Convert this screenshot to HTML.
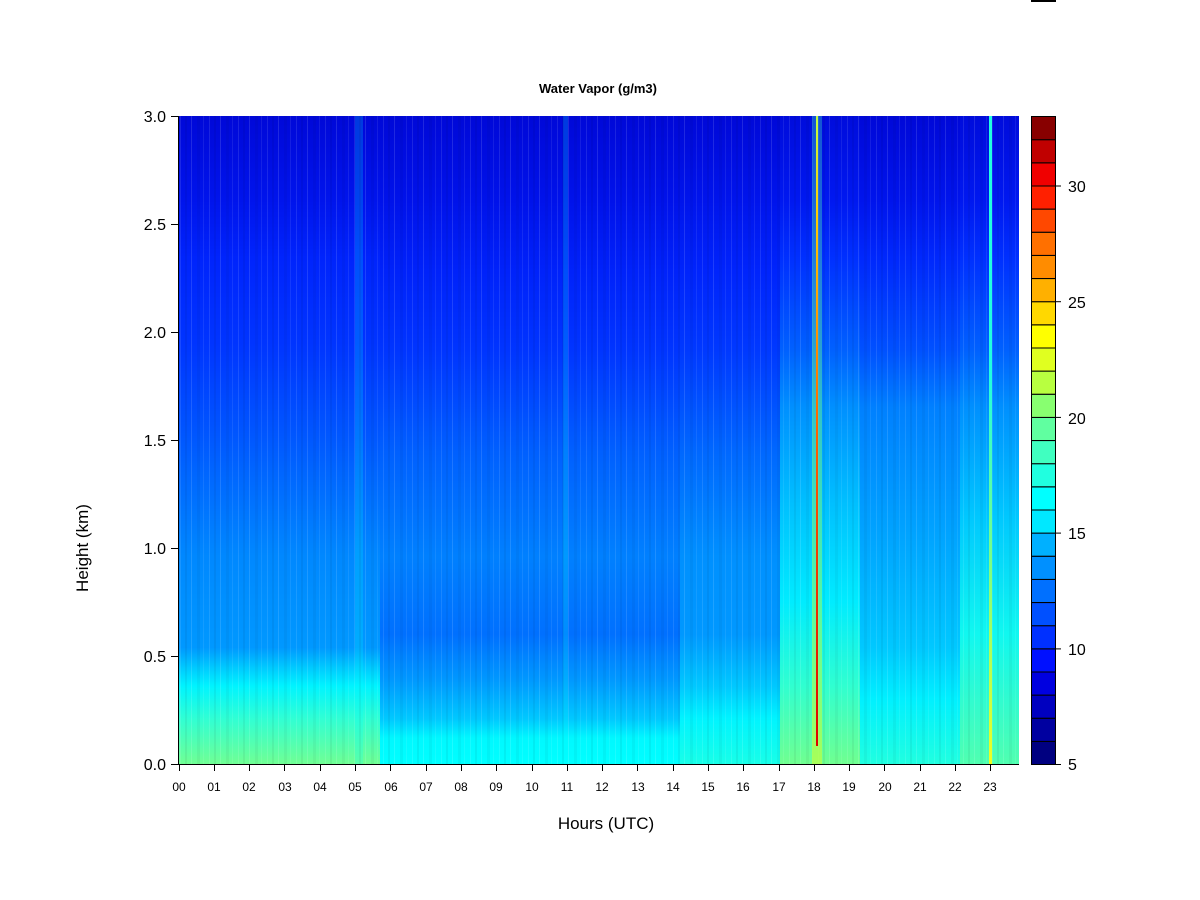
<!DOCTYPE html>
<html><head><meta charset="utf-8"><style>
html,body{margin:0;padding:0;background:#fff;width:1200px;height:900px;overflow:hidden}
svg text{font-family:"Liberation Sans",Arial,sans-serif;fill:#000}
</style></head><body>
<svg width="1200" height="900" viewBox="0 0 1200 900" xmlns="http://www.w3.org/2000/svg">
<defs>
<linearGradient id="gA" gradientUnits="userSpaceOnUse" x1="0" y1="116" x2="0" y2="764">
<stop offset="0" stop-color="#0008d8"/><stop offset="0.13" stop-color="#0014ec"/><stop offset="0.22" stop-color="#0024fc"/>
<stop offset="0.35" stop-color="#0034ff"/><stop offset="0.5" stop-color="#0058ff"/><stop offset="0.68" stop-color="#0088ff"/>
<stop offset="0.82" stop-color="#0098ff"/><stop offset="0.85" stop-color="#00c8ff"/><stop offset="0.88" stop-color="#00f4ff"/>
<stop offset="0.93" stop-color="#30ffd4"/><stop offset="1" stop-color="#70ff94"/>
</linearGradient>
<linearGradient id="gB" gradientUnits="userSpaceOnUse" x1="0" y1="116" x2="0" y2="764">
<stop offset="0" stop-color="#0008d8"/><stop offset="0.13" stop-color="#0012ea"/><stop offset="0.24" stop-color="#0022fa"/>
<stop offset="0.36" stop-color="#0034ff"/><stop offset="0.52" stop-color="#0060ff"/><stop offset="0.68" stop-color="#0080ff"/>
<stop offset="0.8" stop-color="#0070ff"/><stop offset="0.87" stop-color="#0098ff"/><stop offset="0.93" stop-color="#00c8ff"/>
<stop offset="0.96" stop-color="#00f8ff"/><stop offset="1" stop-color="#00ffff"/>
</linearGradient>
<linearGradient id="gC" gradientUnits="userSpaceOnUse" x1="0" y1="116" x2="0" y2="764">
<stop offset="0" stop-color="#0008d8"/><stop offset="0.13" stop-color="#0014ec"/><stop offset="0.24" stop-color="#0024fc"/>
<stop offset="0.36" stop-color="#0038ff"/><stop offset="0.52" stop-color="#0068ff"/><stop offset="0.68" stop-color="#0090ff"/>
<stop offset="0.8" stop-color="#0098ff"/><stop offset="0.88" stop-color="#00c8ff"/><stop offset="0.93" stop-color="#00f4ff"/>
<stop offset="1" stop-color="#18ffe8"/>
</linearGradient>
<linearGradient id="gD" gradientUnits="userSpaceOnUse" x1="0" y1="116" x2="0" y2="764">
<stop offset="0" stop-color="#000cdc"/><stop offset="0.13" stop-color="#0018f0"/><stop offset="0.22" stop-color="#0030ff"/>
<stop offset="0.36" stop-color="#0060ff"/><stop offset="0.45" stop-color="#0090ff"/><stop offset="0.6" stop-color="#00c0ff"/>
<stop offset="0.75" stop-color="#00ecff"/><stop offset="0.88" stop-color="#30ffd0"/><stop offset="1" stop-color="#70ff90"/>
</linearGradient>
<linearGradient id="gE" gradientUnits="userSpaceOnUse" x1="0" y1="116" x2="0" y2="764">
<stop offset="0" stop-color="#0008d8"/><stop offset="0.13" stop-color="#0014ec"/><stop offset="0.22" stop-color="#0028fc"/>
<stop offset="0.36" stop-color="#0050ff"/><stop offset="0.45" stop-color="#0080ff"/><stop offset="0.65" stop-color="#00a4ff"/>
<stop offset="0.82" stop-color="#00c8ff"/><stop offset="0.9" stop-color="#00f0ff"/><stop offset="1" stop-color="#20ffe0"/>
</linearGradient>
<linearGradient id="gF" gradientUnits="userSpaceOnUse" x1="0" y1="116" x2="0" y2="764">
<stop offset="0" stop-color="#000cdc"/><stop offset="0.13" stop-color="#0018f0"/><stop offset="0.22" stop-color="#0030ff"/>
<stop offset="0.36" stop-color="#0060ff"/><stop offset="0.45" stop-color="#0090ff"/><stop offset="0.62" stop-color="#00c8ff"/>
<stop offset="0.8" stop-color="#10f8f0"/><stop offset="1" stop-color="#50ffb0"/>
</linearGradient>
<linearGradient id="red" x1="0" y1="0" x2="0" y2="1">
<stop offset="0" stop-color="#c0ff40"/><stop offset="0.15" stop-color="#ffd000"/>
<stop offset="0.5" stop-color="#ff6000"/><stop offset="1" stop-color="#e00000"/>
</linearGradient>
<linearGradient id="glow" x1="0" y1="0" x2="0" y2="1">
<stop offset="0" stop-color="#40ffc0" stop-opacity="0.3"/><stop offset="0.6" stop-color="#80ff70" stop-opacity="0.5"/>
<stop offset="1" stop-color="#c0ff40" stop-opacity="0.7"/>
</linearGradient>
<linearGradient id="l23" x1="0" y1="0" x2="0" y2="1">
<stop offset="0" stop-color="#20ffe0"/><stop offset="0.4" stop-color="#20ffe0"/><stop offset="0.7" stop-color="#80ff80"/>
<stop offset="1" stop-color="#f0ff20"/>
</linearGradient>
<pattern id="str" width="29" height="648" patternUnits="userSpaceOnUse" x="178" y="116">
<rect x="2" width="1" height="648" fill="#fff" opacity="0.1"/>
<rect x="7" width="2" height="648" fill="#000" opacity="0.05"/>
<rect x="13" width="1" height="648" fill="#fff" opacity="0.12"/>
<rect x="19" width="3" height="648" fill="#000" opacity="0.04"/>
<rect x="25" width="1" height="648" fill="#fff" opacity="0.08"/>
</pattern>
</defs>
<!-- plot -->
<rect x="178" y="116" width="203" height="648" fill="url(#gA)"/>
<rect x="380" y="116" width="301" height="648" fill="url(#gB)"/>
<rect x="680" y="116" width="101" height="648" fill="url(#gC)"/>
<rect x="780" y="116" width="81" height="648" fill="url(#gD)"/>
<rect x="860" y="116" width="101" height="648" fill="url(#gE)"/>
<rect x="960" y="116" width="59" height="648" fill="url(#gF)"/>
<rect x="355" y="116" width="8" height="648" fill="#00ffff" opacity="0.2"/>
<rect x="563" y="116" width="5" height="648" fill="#00ffff" opacity="0.2"/>
<rect x="178" y="116" width="841" height="648" fill="url(#str)"/>
<rect x="812" y="116" width="10" height="648" fill="url(#glow)"/>
<rect x="816" y="116" width="2" height="630" fill="url(#red)"/>
<rect x="989" y="116" width="3" height="648" fill="url(#l23)"/>
<!-- axes -->
<g stroke="#000" stroke-width="1" fill="none">
<line x1="178.5" y1="116" x2="178.5" y2="764"/>
<line x1="178" y1="764.5" x2="1019" y2="764.5"/>
<line x1="171" y1="116.5" x2="178" y2="116.5"/>
<line x1="171" y1="224.5" x2="178" y2="224.5"/>
<line x1="171" y1="332.5" x2="178" y2="332.5"/>
<line x1="171" y1="440.5" x2="178" y2="440.5"/>
<line x1="171" y1="548.5" x2="178" y2="548.5"/>
<line x1="171" y1="656.5" x2="178" y2="656.5"/>
<line x1="171" y1="764.5" x2="178" y2="764.5"/>
</g>
<g font-size="16" text-anchor="end">
<text x="166" y="122">3.0</text><text x="166" y="230">2.5</text><text x="166" y="338">2.0</text>
<text x="166" y="446">1.5</text><text x="166" y="554">1.0</text><text x="166" y="662">0.5</text><text x="166" y="770">0.0</text>
</g>
<g stroke="#000">
<line x1="179.5" y1="764" x2="179.5" y2="771"/><line x1="214.5" y1="764" x2="214.5" y2="771"/>
<line x1="249.5" y1="764" x2="249.5" y2="771"/><line x1="284.5" y1="764" x2="284.5" y2="771"/>
<line x1="320.5" y1="764" x2="320.5" y2="771"/><line x1="355.5" y1="764" x2="355.5" y2="771"/>
<line x1="390.5" y1="764" x2="390.5" y2="771"/><line x1="426.5" y1="764" x2="426.5" y2="771"/>
<line x1="461.5" y1="764" x2="461.5" y2="771"/><line x1="496.5" y1="764" x2="496.5" y2="771"/>
<line x1="532.5" y1="764" x2="532.5" y2="771"/><line x1="567.5" y1="764" x2="567.5" y2="771"/>
<line x1="602.5" y1="764" x2="602.5" y2="771"/><line x1="637.5" y1="764" x2="637.5" y2="771"/>
<line x1="673.5" y1="764" x2="673.5" y2="771"/><line x1="708.5" y1="764" x2="708.5" y2="771"/>
<line x1="743.5" y1="764" x2="743.5" y2="771"/><line x1="779.5" y1="764" x2="779.5" y2="771"/>
<line x1="814.5" y1="764" x2="814.5" y2="771"/><line x1="849.5" y1="764" x2="849.5" y2="771"/>
<line x1="884.5" y1="764" x2="884.5" y2="771"/><line x1="920.5" y1="764" x2="920.5" y2="771"/>
<line x1="955.5" y1="764" x2="955.5" y2="771"/><line x1="990.5" y1="764" x2="990.5" y2="771"/>
</g>
<g font-size="12" text-anchor="middle">
<text x="179" y="791">00</text><text x="214" y="791">01</text><text x="249" y="791">02</text><text x="285" y="791">03</text>
<text x="320" y="791">04</text><text x="355" y="791">05</text><text x="391" y="791">06</text><text x="426" y="791">07</text>
<text x="461" y="791">08</text><text x="496" y="791">09</text><text x="532" y="791">10</text><text x="567" y="791">11</text>
<text x="602" y="791">12</text><text x="638" y="791">13</text><text x="673" y="791">14</text><text x="708" y="791">15</text>
<text x="743" y="791">16</text><text x="779" y="791">17</text><text x="814" y="791">18</text><text x="849" y="791">19</text>
<text x="885" y="791">20</text><text x="920" y="791">21</text><text x="955" y="791">22</text><text x="990" y="791">23</text>
</g>
<text x="606" y="829" font-size="17" text-anchor="middle">Hours (UTC)</text>
<text x="88" y="548" font-size="17" text-anchor="middle" transform="rotate(-90 88 548)">Height (km)</text>
<text x="598" y="93" font-size="13" font-weight="bold" text-anchor="middle">Water Vapor (g/m3)</text>
<!-- colorbar -->
<g stroke="#000" stroke-width="1">
<rect x="1031.5" y="741.4" width="24" height="23.1" fill="#000080"/>
<rect x="1031.5" y="718.3" width="24" height="23.1" fill="#0000a0"/>
<rect x="1031.5" y="695.1" width="24" height="23.1" fill="#0000c0"/>
<rect x="1031.5" y="672" width="24" height="23.1" fill="#0000e0"/>
<rect x="1031.5" y="648.9" width="24" height="23.1" fill="#0010ff"/>
<rect x="1031.5" y="625.7" width="24" height="23.1" fill="#0030ff"/>
<rect x="1031.5" y="602.6" width="24" height="23.1" fill="#0050ff"/>
<rect x="1031.5" y="579.4" width="24" height="23.1" fill="#0070ff"/>
<rect x="1031.5" y="556.3" width="24" height="23.1" fill="#0090ff"/>
<rect x="1031.5" y="533.1" width="24" height="23.1" fill="#00b0ff"/>
<rect x="1031.5" y="510" width="24" height="23.1" fill="#00e8ff"/>
<rect x="1031.5" y="486.9" width="24" height="23.1" fill="#00ffff"/>
<rect x="1031.5" y="463.7" width="24" height="23.1" fill="#20ffe0"/>
<rect x="1031.5" y="440.6" width="24" height="23.1" fill="#40ffc0"/>
<rect x="1031.5" y="417.4" width="24" height="23.1" fill="#60ffa0"/>
<rect x="1031.5" y="394.3" width="24" height="23.1" fill="#88ff70"/>
<rect x="1031.5" y="371.1" width="24" height="23.1" fill="#b8ff40"/>
<rect x="1031.5" y="348" width="24" height="23.1" fill="#e0ff20"/>
<rect x="1031.5" y="324.9" width="24" height="23.1" fill="#ffff00"/>
<rect x="1031.5" y="301.7" width="24" height="23.1" fill="#ffd800"/>
<rect x="1031.5" y="278.6" width="24" height="23.1" fill="#ffb000"/>
<rect x="1031.5" y="255.4" width="24" height="23.1" fill="#ff8c00"/>
<rect x="1031.5" y="232.3" width="24" height="23.1" fill="#ff7000"/>
<rect x="1031.5" y="209.1" width="24" height="23.1" fill="#ff4800"/>
<rect x="1031.5" y="186" width="24" height="23.1" fill="#ff2000"/>
<rect x="1031.5" y="162.9" width="24" height="23.1" fill="#f00000"/>
<rect x="1031.5" y="139.7" width="24" height="23.1" fill="#c00000"/>
<rect x="1031.5" y="116.5" width="24" height="23.2" fill="#880000"/>
<line x1="1055" y1="764.5" x2="1061" y2="764.5"/>
<line x1="1055" y1="648.9" x2="1061" y2="648.9"/>
<line x1="1055" y1="533.1" x2="1061" y2="533.1"/>
<line x1="1055" y1="417.4" x2="1061" y2="417.4"/>
<line x1="1055" y1="301.7" x2="1061" y2="301.7"/>
<line x1="1055" y1="186" x2="1061" y2="186"/>
</g>
<g font-size="16">
<text x="1068" y="770">5</text><text x="1068" y="655">10</text><text x="1068" y="539">15</text>
<text x="1068" y="424">20</text><text x="1068" y="308">25</text><text x="1068" y="192">30</text>
</g>
<rect x="1031" y="0" width="25" height="2" fill="#000"/>
</svg>
</body></html>
